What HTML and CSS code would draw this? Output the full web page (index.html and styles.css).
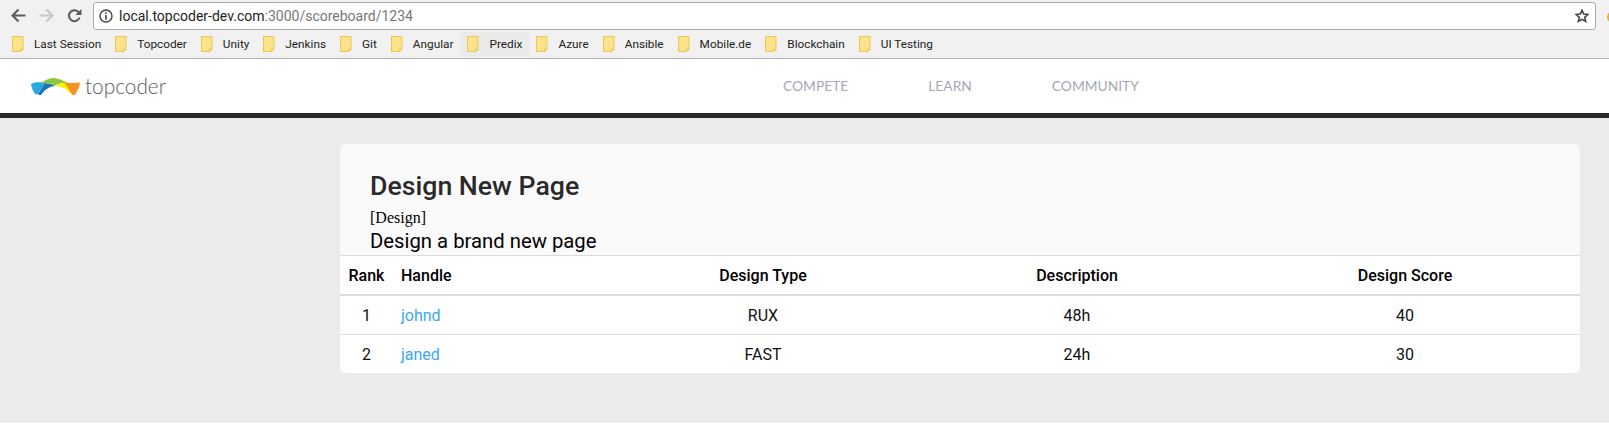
FILE: index.html
```html
<!DOCTYPE html>
<html lang="en">
<head>
    <meta charset="UTF-8">
    <meta name="viewport" content="width=device-width, initial-scale=1.0">
    <title>Scoreboard</title>
    <link rel="stylesheet" href="styles.css">
</head>
<body>
    <svg class="defs" width="0" height="0">
        <symbol id="folder" viewBox="0 0 12 16">
            <path d="M.5.5h10.500v13.500h-2.500v1.500h-8z" fill="#ffe38c" stroke="#edc651"/>
            <path d="M8.500 15.500v-2.500h2.500z" fill="#fff2c4" stroke="#edc651"/>
        </symbol>
    </svg>

    <div class="toolbar">
        <svg class="nav-icon" viewBox="0 0 15 14"><path d="M14.500 7H2M7.500 1L1.500 7l6 6" fill="none" stroke="#5a5a5a" stroke-width="2"/></svg>
        <svg class="nav-icon" viewBox="0 0 15 14"><path d="M.5 7H13M7.500 1l6 6-6 6" fill="none" stroke="#c6c6c6" stroke-width="2"/></svg>
        <svg class="nav-icon" viewBox="0 0 15 15"><path d="M12.600 9.500a5.500 5.500 0 1 1-.8-5.200" fill="none" stroke="#5a5a5a" stroke-width="2"/><path d="M14.500 1v6h-6z" fill="#5a5a5a"/></svg>
        <div class="address">
            <svg class="info-icon" viewBox="0 0 14 14"><circle cx="7" cy="7" r="6" fill="none" stroke="#444" stroke-width="1.400"/><path d="M6.200 3.300h1.600v1.500H6.200zM6.200 6h1.600v4.800H6.200z" fill="#444"/></svg>
            <span class="url">local.topcoder-dev.com<span class="url-rest">:3000/scoreboard/1234</span></span>
            <svg class="star-icon" viewBox="0 0 14 14"><path d="M7 1.200l1.700 3.900 4.200.4-3.200 2.800.95 4.100L7 10.300l-3.650 2.100.95-4.100L1.100 5.500l4.200-.4z" fill="none" stroke="#444" stroke-width="1.600"/></svg>
        </div>
        <div class="ext-icon"></div>
    </div>

    <div class="bookmarks">
        <a class="bookmark"><svg class="folder"><use href="#folder"/></svg>Last Session</a>
        <a class="bookmark"><svg class="folder"><use href="#folder"/></svg>Topcoder</a>
        <a class="bookmark"><svg class="folder"><use href="#folder"/></svg>Unity</a>
        <a class="bookmark"><svg class="folder"><use href="#folder"/></svg>Jenkins</a>
        <a class="bookmark"><svg class="folder"><use href="#folder"/></svg>Git</a>
        <a class="bookmark"><svg class="folder"><use href="#folder"/></svg>Angular</a>
        <a class="bookmark hovered"><svg class="folder"><use href="#folder"/></svg>Predix</a>
        <a class="bookmark"><svg class="folder"><use href="#folder"/></svg>Azure</a>
        <a class="bookmark"><svg class="folder"><use href="#folder"/></svg>Ansible</a>
        <a class="bookmark"><svg class="folder"><use href="#folder"/></svg>Mobile.de</a>
        <a class="bookmark"><svg class="folder"><use href="#folder"/></svg>Blockchain</a>
        <a class="bookmark"><svg class="folder"><use href="#folder"/></svg>UI Testing</a>
    </div>

    <header class="site-header">
        <div class="brand">
            <svg class="logo" viewBox="0 0 49 17">
                <path d="M0 6C3 4 9 4 14 5L7 16C5 17 4 16 3 14.500C1.500 12 .5 9 0 6z" fill="#29a9e1"/>
                <path d="M14 5C18 5.500 21 6.500 24 7.500C18 9 13 12 10.500 16.500C9 17.500 8 17 7 16z" fill="#1b75bb"/>
                <path d="M7 4.400C13 4.200 17 0 22.500 0C28 0 33 4 39 4.600L31 5C28 5.500 26 6.500 24 7.500C20 6 15 4.800 11 4.500z" fill="#8dc63f"/>
                <path d="M24 7.500C27 6 31 5 34 4.800L41.500 16.500C36 11 30 8.500 24 7.500z" fill="#fff200"/>
                <path d="M33.500 4.700C38 5 44 5 49 4.500C48.500 9 46.500 13 44.500 16C43.500 17.500 42 17.500 41 16.500z" fill="#f7941e"/>
            </svg>
            <span class="brand-name">topcoder</span>
        </div>
        <nav class="main-nav">
            <a>COMPETE</a>
            <a>LEARN</a>
            <a>COMMUNITY</a>
        </nav>
    </header>
    <div class="header-rule"></div>

    <main class="content">
        <section class="card">
            <div class="card-head">
                <h1>Design New Page</h1>
                <div class="challenge-type">[Design]</div>
                <div class="challenge-desc">Design a brand new page</div>
            </div>
            <table class="scores">
                <colgroup>
                    <col class="col-rank">
                    <col class="col-handle">
                    <col class="col-type">
                    <col class="col-desc">
                    <col class="col-score">
                </colgroup>
                <thead>
                    <tr>
                        <th>Rank</th>
                        <th class="left">Handle</th>
                        <th>Design Type</th>
                        <th>Description</th>
                        <th>Design Score</th>
                    </tr>
                </thead>
                <tbody>
                    <tr>
                        <td>1</td>
                        <td class="left"><a href="#">johnd</a></td>
                        <td>RUX</td>
                        <td>48h</td>
                        <td>40</td>
                    </tr>
                    <tr>
                        <td>2</td>
                        <td class="left"><a href="#">janed</a></td>
                        <td>FAST</td>
                        <td>24h</td>
                        <td>30</td>
                    </tr>
                </tbody>
            </table>
        </section>
    </main>
</body>
</html>
```

FILE: styles.css
```css
html, body {
    margin: 0;
    height: 429px;
    overflow: hidden;
    background-color: #fff;
    font-family: 'Roboto', sans-serif;
}
.defs {
    position: absolute;
}

/* browser chrome */
.toolbar {
    height: 30px;
    background-color: #f1f1f1;
    display: flex;
    align-items: center;
    padding-left: 11px;
    box-sizing: border-box;
    overflow: hidden;
}
.nav-icon {
    width: 15px;
    height: 15px;
    margin-right: 13px;
    flex-shrink: 0;
}
.address {
    height: 28px;
    width: 1503px;
    flex-shrink: 0;
    margin-left: -2px;
    margin-top: 2px;
    box-sizing: border-box;
    background-color: #fff;
    border: 1px solid #ababab;
    border-radius: 3px;
    display: flex;
    align-items: center;
    padding: 0 6px 0 5px;
}
.info-icon {
    width: 14px;
    height: 14px;
    margin-right: 6px;
}
.url {
    font-size: 14px;
    color: #222;
    flex: 1;
}
.url-rest {
    color: #777;
}
.star-icon {
    width: 14px;
    height: 14px;
}
.ext-icon {
    width: 12px;
    height: 12px;
    margin-left: 11px;
    margin-top: 4px;
    border-radius: 50%;
    background-color: #f0a830;
    flex-shrink: 0;
}
.bookmarks {
    height: 29px;
    background-color: #f1f1f1;
    border-bottom: 1px solid #b4b4b4;
    box-sizing: border-box;
    padding: 2px 0 2px 5px;
    display: flex;
}
.bookmark {
    display: flex;
    align-items: center;
    padding: 0 7px;
    font-size: 11.8px;
    color: #222;
}
.bookmark.hovered {
    background-color: #eaeaea;
}
.folder {
    width: 12px;
    height: 16px;
    margin-right: 10px;
}

/* site header */
.site-header {
    height: 54px;
    background-color: #fff;
    display: flex;
    align-items: center;
    padding-left: 31px;
}
.brand {
    width: 752px;
    display: flex;
    align-items: center;
}
.logo {
    width: 49px;
    height: 17px;
    margin-right: 5px;
}
.brand-name {
    font-family: 'Lato', sans-serif;
    font-weight: 300;
    font-size: 20.8px;
    color: #5c5c5c;
    padding-bottom: 2px;
}
.main-nav {
    display: flex;
    gap: 80px;
    font-family: 'Lato', sans-serif;
    font-size: 13.8px;
    color: #a5a8b4;
    padding-bottom: 2px;
}
.header-rule {
    height: 5px;
    background-color: #2a2a2a;
}

/* scoreboard */
.content {
    height: 305px;
    box-sizing: border-box;
    background-color: #ebebeb;
    padding: 26px 0 0 340px;
}
.card {
    width: 1240px;
    height: 229px;
    border-radius: 6px;
    overflow: hidden;
    background-color: #fff;
}
.card-head {
    height: 112px;
    box-sizing: border-box;
    background-color: #fafafa;
    padding: 26px 0 0 30px;
    border-bottom: 1px solid #dcdcdc;
}
h1 {
    margin: 0;
    font-size: 26.7px;
    font-weight: 500;
    line-height: 33px;
    color: #2a2a2a;
}
.challenge-type {
    font-family: 'Liberation Serif', serif;
    font-size: 16px;
    line-height: 20px;
    margin-top: 5px;
    color: #000;
}
.challenge-desc {
    font-size: 20.3px;
    line-height: 24px;
    margin-top: 1px;
    color: #000;
}
.scores {
    width: 1240px;
    table-layout: fixed;
    border-collapse: collapse;
    font-size: 16px;
    color: #111;
}
.col-rank { width: 53px; }
.col-handle { width: 209px; }
.col-type { width: 322px; }
.col-desc { width: 306px; }
.col-score { width: 350px; }
.scores th, .scores td {
    padding: 0;
    text-align: center;
    height: 38px;
}
.scores th {
    font-weight: 500;
    color: #000;
    border-bottom: 2px solid #dcdcdc;
}
.scores tbody tr + tr td {
    border-top: 1px solid #dcdcdc;
}
.scores .left {
    text-align: left;
    padding-left: 8px;
}
.scores a {
    color: #3aa9ee;
    text-decoration: none;
}
```
